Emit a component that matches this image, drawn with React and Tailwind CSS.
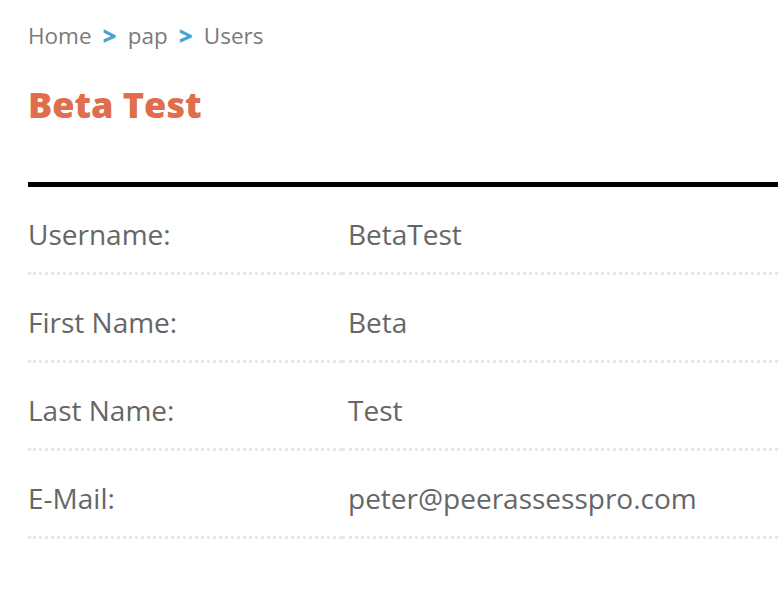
const crumbs = ['Home', 'pap', 'Users'];

const rows = [
  { label: 'Username:', value: 'BetaTest' },
  { label: 'First Name:', value: 'Beta' },
  { label: 'Last Name:', value: 'Test' },
  { label: 'E-Mail:', value: 'peter@peerassesspro.com' },
];

const Breadcrumbs = () => (
  <nav className="flex h-[30px] items-center text-[22.5px] leading-[30px] text-[#7a7a7a]">
    {crumbs.map((c, i) => (
      <span key={c} className="flex items-center">
        {i > 0 && <span className="mx-[11px] text-[24px] font-extrabold text-[#4aa3cf]">&gt;</span>}
        <span>{c}</span>
      </span>
    ))}
  </nav>
);

const DetailRow = ({ label, value }) => (
  <div className="flex text-[28px] leading-[34px] text-[#666666]">
    <div className="w-[314px] shrink-0 border-b-[3px] border-dotted border-[#e6e6e6] pt-[30px] pb-[21px]">{label}</div>
    <div className="flex-1 border-b-[3px] border-dotted border-[#e6e6e6] pt-[30px] pb-[21px] pl-[6px]">{value}</div>
  </div>
);

export default function App() {
  return (
    <div className="min-h-[594px] bg-white pt-[21px] pl-[28px] font-['Open_Sans',sans-serif]">
      <Breadcrumbs />
      <h1 className="mt-[32px] text-[36px] font-extrabold leading-[44px] text-[#e06d4b]">Beta Test</h1>
      <div className="mt-[55px] h-[5px] bg-black" />
      <div>
        {rows.map((r) => (
          <DetailRow key={r.label} {...r} />
        ))}
      </div>
    </div>
  );
}
